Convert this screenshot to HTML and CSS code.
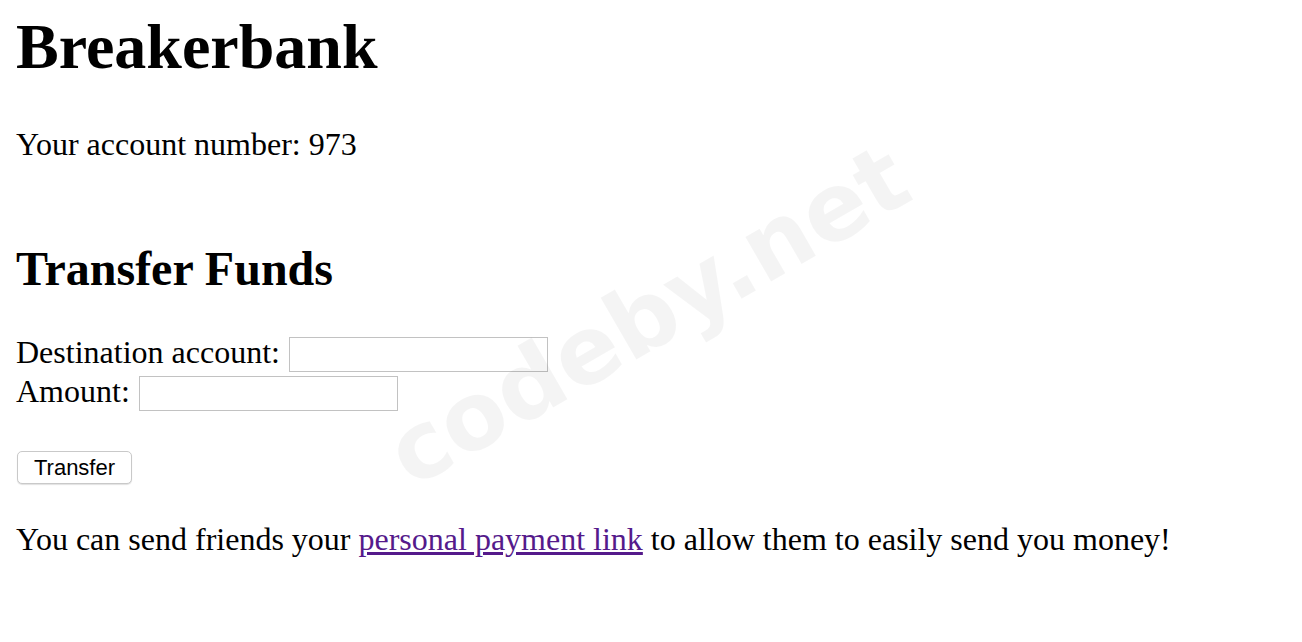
FILE: index.html
```html
<!doctype html>
<html lang="en">
<head>
  <meta charset="UTF-8" />
  <title>Breakerbank</title>
  <link rel="stylesheet" href="styles.css">
</head>
<body>
  <div class="page">
    <h1 class="title">Breakerbank</h1>
    <p class="account">Your account number: 973</p>

    <h2 class="section-title">Transfer Funds</h2>
    <form class="transfer-form" action="">
      <div class="form-row">
        <label for="dest">Destination account:</label>
        <input type="text" id="dest" class="input-field">
      </div>
      <div class="form-row">
        <label for="amount">Amount:</label>
        <input type="text" id="amount" class="input-field">
      </div>
      <button type="submit" class="btn">Transfer</button>
    </form>

    <p class="note">You can send friends your <a href="#" class="pay-link">personal payment link</a> to allow them to easily send you money!</p>
  </div>

  <!-- watermark -->
  <span class="watermark">codeby.net</span>
</body>
</html>
```

FILE: styles.css
```css
/* ------------------ Reset & Globals ------------------ */
* {
  margin: 0;
  padding: 0;
  box-sizing: border-box;
}
body {
  font-family: 'Liberation Serif', 'Times New Roman', serif;
  font-size: 32px;
  color: #000;
  background: #fff;
  position: relative;
  min-height: 100vh;
  overflow: hidden;
}
.page {
  padding: 10px 16px 0;
}

/* ------------------ Headings ------------------ */
.title {
  font-size: 64px;
  font-weight: bold;
}
.account {
  margin-top: 42px;
}
.section-title {
  font-size: 48px;
  font-weight: bold;
  margin-top: 77.6px;
}

/* ------------------ Form ------------------ */
.transfer-form {
  margin-top: 38.7px;
}
.form-row {
  display: flex;
  align-items: flex-start;
  gap: 9px;
  height: 38.4px;
}
.form-row label {
  line-height: 36.8px;
}
.input-field {
  width: 259px;
  height: 35px;
  margin-top: 3px;
  border: 1px solid #c2c2c2;
  background: #fff;
  font-size: 22px;
}
.btn {
  display: block;
  width: 115px;
  height: 33px;
  margin: 40px 0 0 1px;
  background: #fff;
  border: 1px solid #c9c9c9;
  border-radius: 5px;
  box-shadow: 0 1px 1px rgba(0, 0, 0, 0.12);
  font-family: 'Liberation Sans', Arial, sans-serif;
  font-size: 22px;
  color: #000;
  cursor: pointer;
}

/* ------------------ Note ------------------ */
.note {
  margin-top: 36.8px;
}
.pay-link {
  color: #551a8b;
  text-decoration: underline;
}

/* ------------------ Watermark ------------------ */
.watermark {
  position: absolute;
  left: 412px;
  top: 409.5px;
  display: block;
  white-space: nowrap;
  font-family: 'DejaVu Sans', Verdana, sans-serif;
  font-weight: bold;
  font-size: 94px;
  line-height: 1;
  color: rgba(0, 0, 0, 0.045);
  transform-origin: 0 79.5px;
  transform: rotate(-30deg);
  pointer-events: none;
}
```
